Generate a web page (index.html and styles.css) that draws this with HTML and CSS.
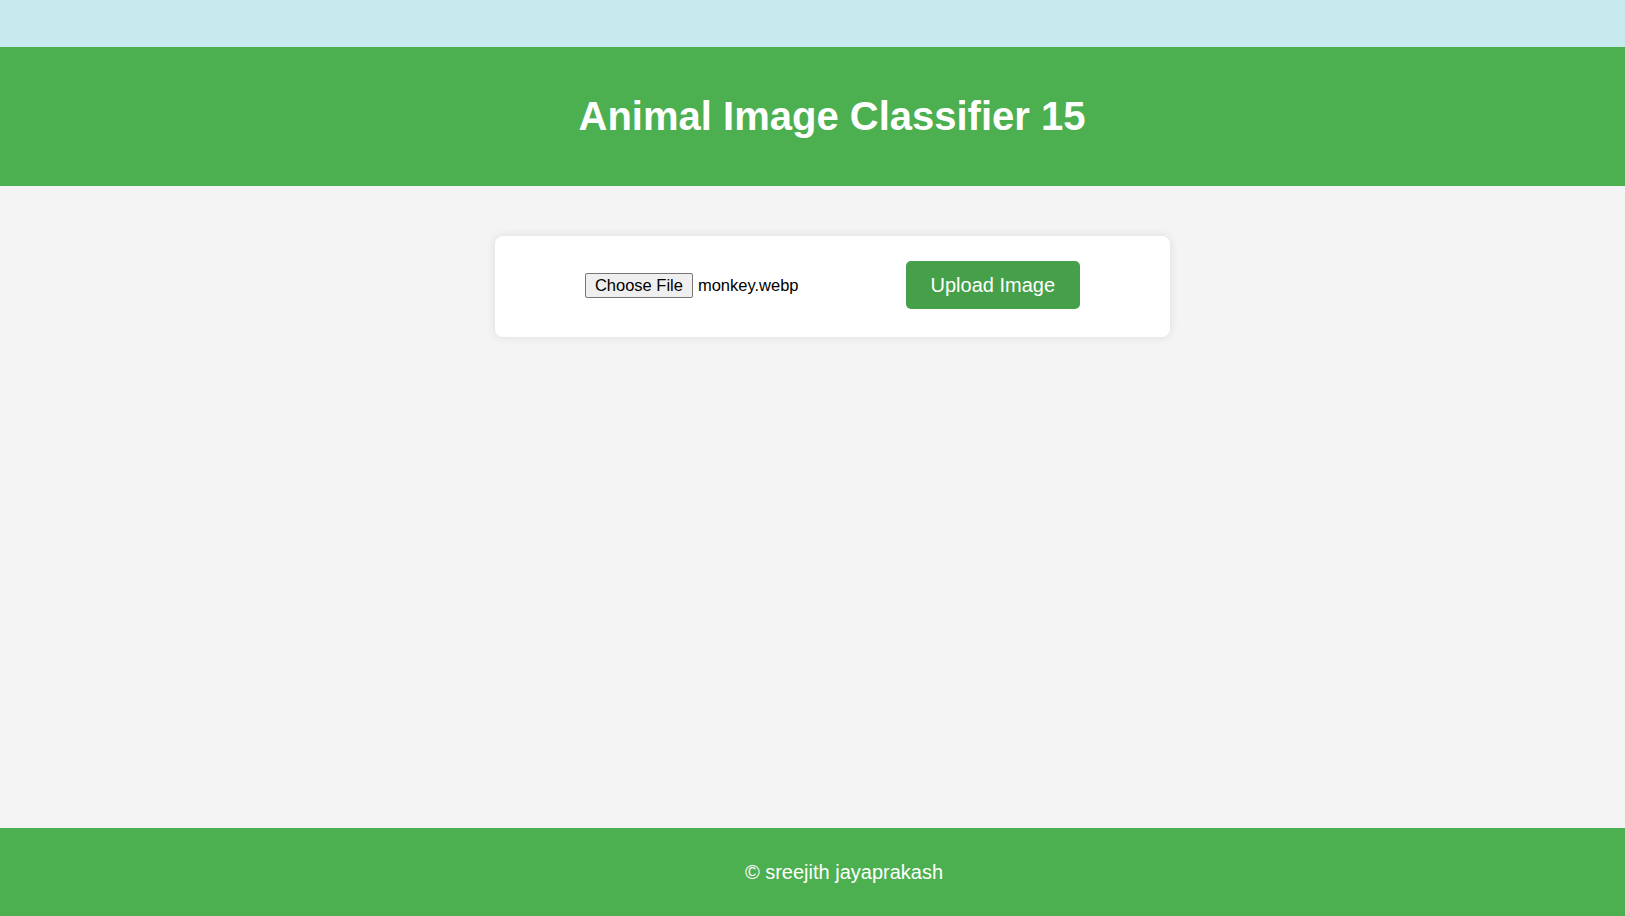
FILE: index.html
```html
<!DOCTYPE html>
<html lang="en">
<head>
<meta charset="utf-8">
<title>Animal Image Classifier 15</title>
<link rel="stylesheet" href="styles.css">
</head>
<body>
  <div class="topbar"></div>
  <header class="site-header">
    <h1 class="title">Animal Image Classifier 15</h1>
  </header>
  <main class="main">
    <form class="upload-card">
      <div class="file-picker">
        <button type="button" class="choose-btn">Choose File</button>
        <span class="file-name">monkey.webp</span>
      </div>
      <button type="button" class="upload-btn">Upload Image</button>
    </form>
  </main>
  <footer class="site-footer">
    <p class="footer-text">© sreejith jayaprakash</p>
  </footer>
</body>
</html>
```

FILE: styles.css
```css
html, body {
  margin: 0;
  padding: 0;
  height: 100%;
}

body {
  font-family: "Liberation Sans", Arial, sans-serif;
  background: #f4f4f4;
  display: flex;
  flex-direction: column;
  min-height: 100vh;
  overflow: hidden;
}

.topbar {
  height: 47px;
  background: #c8e9ee;
  flex: none;
}

.site-header {
  background: #4caf50;
  color: #ffffff;
  height: 139px;
  box-sizing: border-box;
  padding: 46px 0 0 39px;
  flex: none;
}

.title {
  margin: 0;
  font-size: 40px;
  font-weight: bold;
  line-height: 46px;
  text-align: center;
  white-space: nowrap;
}

.main {
  flex: 1;
  padding: 50px 0 0 40px;
}

.upload-card {
  width: 675px;
  box-sizing: border-box;
  margin: 0 auto;
  background: #ffffff;
  border-radius: 8px;
  box-shadow: 0 0 10px rgba(0, 0, 0, 0.1);
  padding: 25px 0 28px;
  display: flex;
  align-items: center;
  justify-content: center;
  gap: 107px;
}

.file-picker {
  display: flex;
  align-items: center;
  gap: 5px;
  white-space: nowrap;
}

.choose-btn {
  font-family: "Liberation Sans", Arial, sans-serif;
  font-size: 16.5px;
  line-height: 19px;
  color: #000000;
  background: #efefef;
  border: 1px solid #767676;
  border-radius: 2px;
  padding: 2px 9px;
  height: 25px;
  box-sizing: border-box;
  white-space: nowrap;
}

.file-name {
  font-size: 16.5px;
  color: #000000;
}

.upload-btn {
  font-family: "Liberation Sans", Arial, sans-serif;
  font-size: 20px;
  line-height: 24px;
  color: #ffffff;
  background: #45a049;
  border: none;
  border-radius: 5px;
  padding: 12px 25px;
  white-space: nowrap;
}

.site-footer {
  background: #4caf50;
  color: #ffffff;
  height: 88px;
  box-sizing: border-box;
  padding: 33px 0 0 63px;
  flex: none;
}

.footer-text {
  margin: 0;
  font-size: 20px;
  line-height: 23px;
  text-align: center;
  white-space: nowrap;
}
```
